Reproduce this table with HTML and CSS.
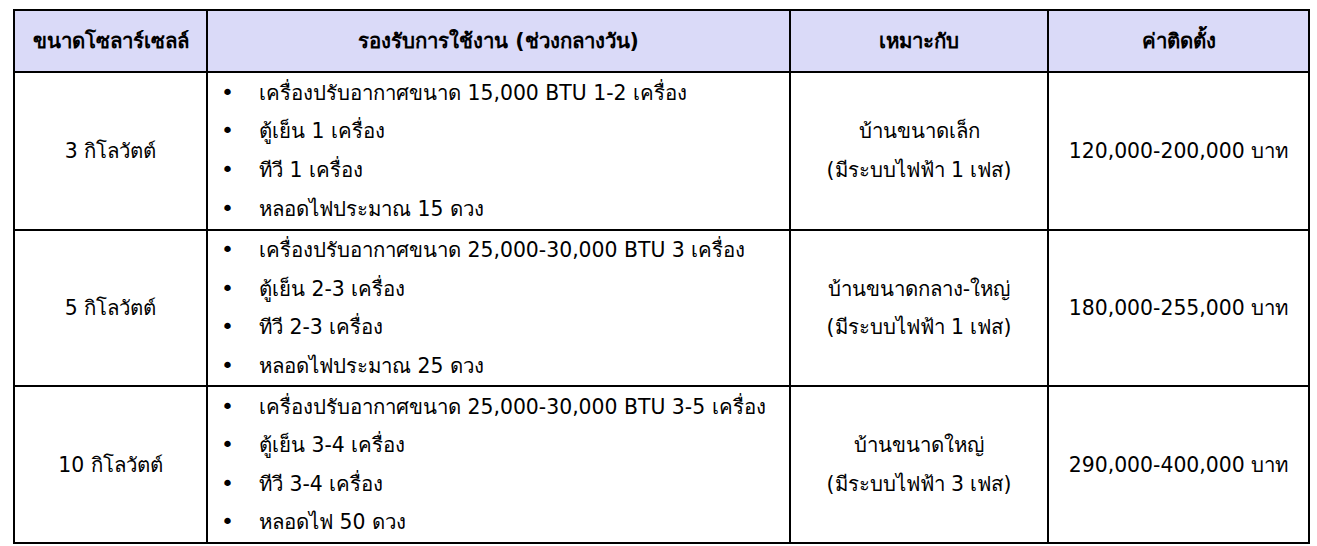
FILE: index.html
```html
<!DOCTYPE html>
<html lang="th">
<head>
<meta charset="utf-8">
<title>ขนาดโซลาร์เซลล์</title>
<link rel="stylesheet" href="styles.css">
</head>
<body>
<table class="solar">
  <colgroup>
    <col class="c1">
    <col class="c2">
    <col class="c3">
    <col class="c4">
  </colgroup>
  <thead>
    <tr class="head">
      <th>ขนาดโซลาร์เซลล์</th>
      <th>รองรับการใช้งาน (ช่วงกลางวัน)</th>
      <th>เหมาะกับ</th>
      <th>ค่าติดตั้ง</th>
    </tr>
  </thead>
  <tbody>
    <tr class="r1">
      <td>3 กิโลวัตต์</td>
      <td class="list">
        <ul>
          <li>เครื่องปรับอากาศขนาด 15,000 BTU 1-2 เครื่อง</li>
          <li>ตู้เย็น 1 เครื่อง</li>
          <li>ทีวี 1 เครื่อง</li>
          <li>หลอดไฟประมาณ 15 ดวง</li>
        </ul>
      </td>
      <td>บ้านขนาดเล็ก<br>(มีระบบไฟฟ้า 1 เฟส)</td>
      <td>120,000-200,000 บาท</td>
    </tr>
    <tr class="r2">
      <td>5 กิโลวัตต์</td>
      <td class="list">
        <ul>
          <li>เครื่องปรับอากาศขนาด 25,000-30,000 BTU 3 เครื่อง</li>
          <li>ตู้เย็น 2-3 เครื่อง</li>
          <li>ทีวี 2-3 เครื่อง</li>
          <li>หลอดไฟประมาณ 25 ดวง</li>
        </ul>
      </td>
      <td>บ้านขนาดกลาง-ใหญ่<br>(มีระบบไฟฟ้า 1 เฟส)</td>
      <td>180,000-255,000 บาท</td>
    </tr>
    <tr class="r3">
      <td>10 กิโลวัตต์</td>
      <td class="list">
        <ul>
          <li>เครื่องปรับอากาศขนาด 25,000-30,000 BTU 3-5 เครื่อง</li>
          <li>ตู้เย็น 3-4 เครื่อง</li>
          <li>ทีวี 3-4 เครื่อง</li>
          <li>หลอดไฟ 50 ดวง</li>
        </ul>
      </td>
      <td>บ้านขนาดใหญ่<br>(มีระบบไฟฟ้า 3 เฟส)</td>
      <td>290,000-400,000 บาท</td>
    </tr>
  </tbody>
</table>
</body>
</html>
```

FILE: styles.css
```css
html, body {
  margin: 0;
  padding: 0;
  background: #ffffff;
}

body {
  padding: 9px 0 0 13px;
  font-family: "DejaVu Sans", "Noto Sans", sans-serif;
  color: #000000;
}

.solar {
  border-collapse: collapse;
  table-layout: fixed;
  width: 1295px;
  font-size: 20.4px;
}

.c1 { width: 193px; }
.c2 { width: 583px; }
.c3 { width: 258px; }
.c4 { width: 261px; }

.solar th,
.solar td {
  border: 2px solid #000000;
  padding: 0;
  text-align: center;
  vertical-align: middle;
  line-height: 38.6px;
  font-weight: normal;
}

.solar th {
  background: #dadaf8;
  font-weight: bold;
}

.head { height: 62px; }
.r1 { height: 158px; }
.r2 { height: 154px; }
.r3 { height: 157px; }

.solar td.list {
  text-align: left;
}

.list ul {
  margin: 0;
  padding: 0 0 0 13px;
  list-style: none;
}

.list li::before {
  content: "\2022";
  display: inline-block;
  width: 38px;
  font-size: 22px;
}
```
